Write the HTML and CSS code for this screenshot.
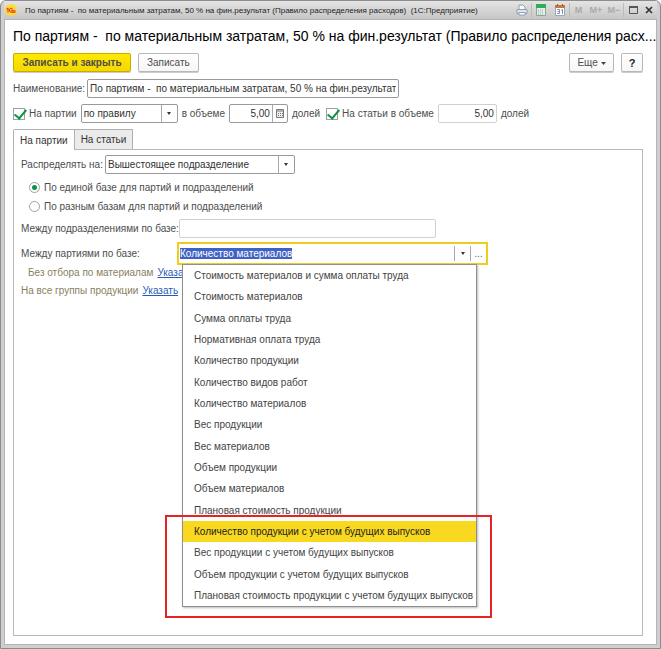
FILE: index.html
```html
<!DOCTYPE html>
<html lang="ru">
<head>
  <meta charset="UTF-8" />
  <meta name="viewport" content="width=device-width, initial-scale=1.0"/>
  <title>Правило распределения расходов</title>
  <link rel="stylesheet" href="styles.css">
</head>
<body>
  <div class="window">
    <header class="titlebar">
      <svg class="logo" viewBox="0 0 12 12" width="12" height="12">
        <circle cx="6" cy="6" r="6" fill="#ffd83a"/>
        <path d="M1.500 5L3 4V8.500M7.500 4.800C6 3.600 4.500 4.500 4.500 6.200C4.500 7.800 5.500 8.200 6.500 8.200H10.500M7.500 6C6.500 5.700 6 6.800 7 6.900H10.500" fill="none" stroke="#d8201c"/>
      </svg>
      <span class="titlebar-text">По партиям -&nbsp; по материальным затратам, 50 % на фин.результат (Правило распределения расходов)&nbsp; (1С:Предприятие)</span>
      <div class="titlebar-tools">
        <button class="tool" aria-label="Печать">
          <svg viewBox="0 0 12 12" width="12" height="12">
            <path d="M3 5V1H7L9 3V5" fill="#fff" stroke="#8fa0b2"/>
            <path d="M1 5.500H11V9.500H1Z" fill="#dbe5ee" stroke="#8fa0b2"/>
            <path d="M3 8.500H9V11H3Z" fill="#fff" stroke="#8fa0b2"/>
          </svg>
        </button>
        <button class="tool divided" aria-label="Калькулятор">
          <svg viewBox="0 0 10 12" width="10" height="12">
            <path d="M0.500 0.500H9.500V11.500H0.500Z" fill="#e8efea" stroke="#87a892"/>
            <path d="M0 0H10V4H0Z" fill="#2fab5c"/>
            <path d="M2 6H8M2 8H8M2 10H8" stroke="#94aea0" stroke-dasharray="1 1"/>
          </svg>
        </button>
        <button class="tool" aria-label="Календарь">
          <svg viewBox="0 0 10 12" width="10" height="12">
            <path d="M0.500 1.500H9.500V11.500H0.500Z" fill="#fff" stroke="#9aa5b8"/>
            <path d="M0 1H10V4H0Z" fill="#c9763f"/>
            <path d="M2.500 0V2M7.500 0V2" stroke="#8a5a3a"/>
            <path d="M2 5.500H4.500V9.500H2M2.500 7.500H4.500M6 6.500L7.500 5.500V10" fill="none" stroke="#8093b8"/>
          </svg>
        </button>
        <button class="tool memory divided">M</button>
        <button class="tool memory">M+</button>
        <button class="tool memory">M−</button>
        <button class="tool divided" aria-label="Развернуть">
          <svg viewBox="0 0 9 8" width="9" height="8"><path d="M0.500 1H8.500V7.500H0.500Z" fill="none" stroke="#555"/><path d="M0 1H9" stroke="#555" stroke-width="2"/></svg>
        </button>
        <button class="tool close" aria-label="Закрыть">
          <svg viewBox="0 0 8 8" width="8" height="8"><path d="M1 1L7 7M7 1L1 7" stroke="#333" stroke-width="1.700"/></svg>
        </button>
      </div>
    </header>

    <main class="form">
      <h1>По партиям -&nbsp; по материальным затратам, 50 % на фин.результат (Правило распределения расх...</h1>

      <div class="commands">
        <button class="btn primary">Записать и закрыть</button>
        <button class="btn">Записать</button>
        <button class="btn more">Еще <svg viewBox="0 0 5 3" width="5" height="3"><path d="M0 0H5L2.500 3Z" fill="#444"/></svg></button>
        <button class="btn help">?</button>
      </div>

      <div class="row name-row">
        <label for="name">Наименование:</label>
        <input class="field name" id="name" type="text" value="По партиям -&nbsp; по материальным затратам, 50 % на фин.результат">
      </div>

      <div class="row shares">
        <label class="check"><input type="checkbox" checked>На партии</label>
        <div class="field select rule">
          <select aria-label="На партии">
            <option>по правилу</option>
          </select>
          <span class="arrow"></span>
        </div>
        <label for="share1">в объеме</label>
        <div class="field amount">
          <input id="share1" type="text" value="5,00">
          <button class="calc" aria-label="Калькулятор">
            <svg viewBox="0 0 8 9" width="8" height="9"><path d="M0.500 0.500H7.500V8.500H0.500Z" fill="#eee" stroke="#777"/><path d="M1 2H7" stroke="#777"/><path d="M2 4.500H7M2 6.500H7" stroke="#777" stroke-dasharray="1 1"/></svg>
          </button>
        </div>
        <span>долей</span>
        <label class="check second"><input type="checkbox" checked>На статьи в объеме</label>
        <input class="field light share2" type="text" value="5,00" aria-label="На статьи в объеме">
        <span>долей</span>
      </div>

      <div class="tabs" role="tablist">
        <button class="tab active" role="tab">На партии</button>
        <button class="tab" role="tab">На статьи</button>
      </div>

      <section class="panel">
        <div class="row">
          <label for="target">Распределять на:</label>
          <div class="field select target">
            <select id="target">
              <option>Вышестоящее подразделение</option>
            </select>
            <span class="arrow"></span>
          </div>
        </div>

        <div class="radios">
          <label class="radio"><input type="radio" name="base" checked>По единой базе для партий и подразделений</label>
          <label class="radio"><input type="radio" name="base">По разным базам для партий и подразделений</label>
        </div>

        <div class="base-row">
          <label for="dept">Между подразделениями по базе:</label>
          <input class="field light dept" id="dept" type="text">
        </div>

        <div class="base-row">
          <label for="party">Между партиями по базе:</label>
          <div class="combo">
            <input id="party" type="text" value="Количество материалов">
            <button class="arrow" aria-label="Выбрать из списка"></button>
            <button class="dots" aria-label="Выбрать">...</button>
            <div class="dropdown">
              <ul>
                <li>Стоимость материалов и сумма оплаты труда</li>
                <li>Стоимость материалов</li>
                <li>Сумма оплаты труда</li>
                <li>Нормативная оплата труда</li>
                <li>Количество продукции</li>
                <li>Количество видов работ</li>
                <li>Количество материалов</li>
                <li>Вес продукции</li>
                <li>Вес материалов</li>
                <li>Объем продукции</li>
                <li>Объем материалов</li>
                <li>Плановая стоимость продукции</li>
                <li class="current">Количество продукции с учетом будущих выпусков</li>
                <li>Вес продукции с учетом будущих выпусков</li>
                <li>Объем продукции с учетом будущих выпусков</li>
                <li>Плановая стоимость продукции с учетом будущих выпусков</li>
              </ul>
              <div class="marker"></div>
            </div>
          </div>
        </div>

        <div class="filters">
          <div class="filter indent"><span>Без отбора по материалам</span><a href="#">Указать</a></div>
          <div class="filter"><span>На все группы продукции</span><a href="#">Указать</a></div>
        </div>
      </section>
    </main>
  </div>
  <script>
    const party = document.getElementById('party');
    party.focus();
    party.select();
  </script>
</body>
</html>
```
FILE: styles.css
```css
* {
  box-sizing: border-box;
}
body {
  margin: 0;
  background: #fff;
  font-family: "Liberation Sans", Arial, sans-serif;
  font-size: 10px;
  color: #4d4d4d;
}
button, input, select {
  font: inherit;
  color: inherit;
  margin: 0;
  padding: 0;
  border: none;
  background: none;
  outline: none;
  min-width: 0;
}
.window {
  min-height: 100vh;
  display: flex;
  flex-direction: column;
  background: #cfcfcf;
  border: 1px solid #8c8c8c;
  border-radius: 6px 6px 0 0;
  padding: 0 3px 3px;
}

/* title bar */
.titlebar {
  display: flex;
  align-items: center;
  height: 18px;
  padding: 0 1px;
  background: linear-gradient(#e4e4e4, #c6c6c6);
}
.titlebar-text {
  flex: 1;
  margin-left: 8px;
  font-size: 8px;
  color: #222;
  white-space: nowrap;
  overflow: hidden;
}
.titlebar-tools {
  display: flex;
  align-items: center;
}
.tool {
  display: flex;
  align-items: center;
  justify-content: center;
  width: 19px;
  height: 14px;
}
.tool.divided {
  border-left: 1px solid #bbb;
}
.tool.memory {
  width: 18px;
  font-size: 9px;
  font-weight: bold;
  color: #aaa;
}
.tool.close {
  width: 14px;
}

/* form */
.form {
  flex: 1;
  display: flex;
  flex-direction: column;
  background: #fff;
  border: 1px solid #b5b5b5;
  padding: 6px 13px 8px 8px;
}
h1 {
  margin: 0 0 7px;
  font-size: 14px;
  line-height: 20px;
  font-weight: normal;
  color: #000;
  white-space: nowrap;
}
.commands {
  display: flex;
  gap: 7px;
  margin-bottom: 7px;
}
.btn {
  height: 19px;
  padding: 0 8px;
  border: 1px solid #b8b8b8;
  border-radius: 2px;
  background: linear-gradient(#fff, #f6f6f6);
  box-shadow: 0 1px 0 #ccc;
}
.btn.primary {
  width: 118px;
  padding: 0;
  border-color: #c9ac00;
  background: linear-gradient(#ffe900, #f5d800);
  font-weight: bold;
}
.btn.more {
  width: 45px;
  padding: 0;
  margin-left: auto;
}
.btn svg {
  vertical-align: middle;
}
.btn.help {
  width: 22px;
  padding: 0;
  font-size: 11px;
  font-weight: bold;
  color: #222;
}
.row {
  display: flex;
  align-items: center;
  gap: 2px;
  white-space: nowrap;
}
.field {
  display: flex;
  height: 19px;
  border: 1px solid #999;
  border-radius: 2px;
  background: #fff;
  color: #333;
}
.field.light {
  border-color: #d0d0d0;
}
.name-row {
  margin-bottom: 6px;
}
.name {
  width: 312px;
  padding: 0 2px;
}
.shares {
  gap: 4px;
  margin-bottom: 6px;
}
.check {
  display: flex;
  align-items: center;
  gap: 4px;
}
.check.second {
  margin-left: 2px;
}
.check input {
  appearance: none;
  width: 12px;
  height: 12px;
  border: 1px solid #a0a0a0;
  position: relative;
}
.check input:checked::after {
  content: "";
  position: absolute;
  left: 3px;
  top: -2px;
  width: 5px;
  height: 10px;
  border: solid #0a9447;
  border-width: 0 2px 2px 0;
  transform: rotate(40deg);
}
.select select {
  flex: 1;
  appearance: none;
  padding: 0 2px;
}
.arrow {
  width: 16px;
  border-left: 1px solid #aaa;
  display: flex;
  align-items: center;
  justify-content: center;
}
.arrow::after {
  content: "";
  border: 2px solid transparent;
  border-top: 3px solid #333;
  border-bottom: none;
}
.rule {
  width: 97px;
}
.amount {
  width: 59px;
}
.amount input {
  flex: 1;
  padding-right: 2px;
  text-align: right;
}
.calc {
  width: 15px;
  border-left: 1px solid #aaa;
  display: flex;
  align-items: center;
  justify-content: center;
}
.share2 {
  width: 59px;
  padding-right: 2px;
  text-align: right;
}

/* tabs */
.tabs {
  display: flex;
}
.tab {
  height: 20px;
  padding: 0 6px;
  border: 1px solid #b0b0b0;
  border-bottom: none;
  border-left: none;
  background: #ebebeb;
  color: #333;
}
.tab.active {
  height: 21px;
  margin-bottom: -1px;
  border-left: 1px solid #b0b0b0;
  border-radius: 2px 0 0 0;
  background: #fff;
  z-index: 1;
}
.panel {
  flex: 1;
  border: 1px solid #b8b8b8;
  padding: 5px 7px;
}
.target {
  width: 190px;
}
.radios {
  padding: 4px 8px 3px;
}
.radio {
  display: flex;
  align-items: center;
  gap: 4px;
  height: 19px;
}
.radio input {
  appearance: none;
  width: 11px;
  height: 11px;
  border: 1px solid #a0a0a0;
  border-radius: 50%;
}
.radio input:checked {
  background: radial-gradient(circle, #0a9447 0 2px, #fff 3px);
}
.base-row {
  display: grid;
  grid-template-columns: 156px 1fr;
  align-items: center;
  margin-bottom: 4px;
  white-space: nowrap;
}
.dept {
  width: 257px;
  margin-left: 2px;
}
.combo {
  position: relative;
  display: flex;
  width: 311px;
  height: 23px;
  padding: 2px 0;
  border: 2px solid #f0cc20;
}
.combo input {
  flex: 1;
  padding-left: 1px;
  color: #333;
}
.combo input::selection {
  background: #3f62c4;
  color: #fff;
}
.dots {
  width: 16px;
  border-left: 1px solid #aaa;
  color: #666;
}
.dropdown {
  position: absolute;
  left: 3px;
  top: 20px;
  width: 295px;
  border: 1px solid #8f8f8f;
  background: #fff;
  box-shadow: 1px 1px 2px #bbb;
}
.dropdown ul {
  display: grid;
  grid-auto-rows: 1fr;
  height: 341px;
  margin: 0;
  padding: 0;
  list-style: none;
}
.dropdown li {
  display: flex;
  align-items: center;
  padding-left: 11px;
  color: #444;
}
.dropdown .current {
  background: #f9d91f;
  color: #222;
}
.marker {
  position: absolute;
  left: -18px;
  top: 250px;
  width: 327px;
  height: 103px;
  border: 2px solid #e62222;
}

/* filters */
.filters {
  display: grid;
  gap: 3px;
  margin-top: -4px;
  line-height: 15px;
}
.filter {
  display: flex;
  gap: 4px;
  color: #8a8060;
}
.filter.indent {
  padding-left: 7px;
}
.filter a {
  color: #2a5ab8;
}
```
